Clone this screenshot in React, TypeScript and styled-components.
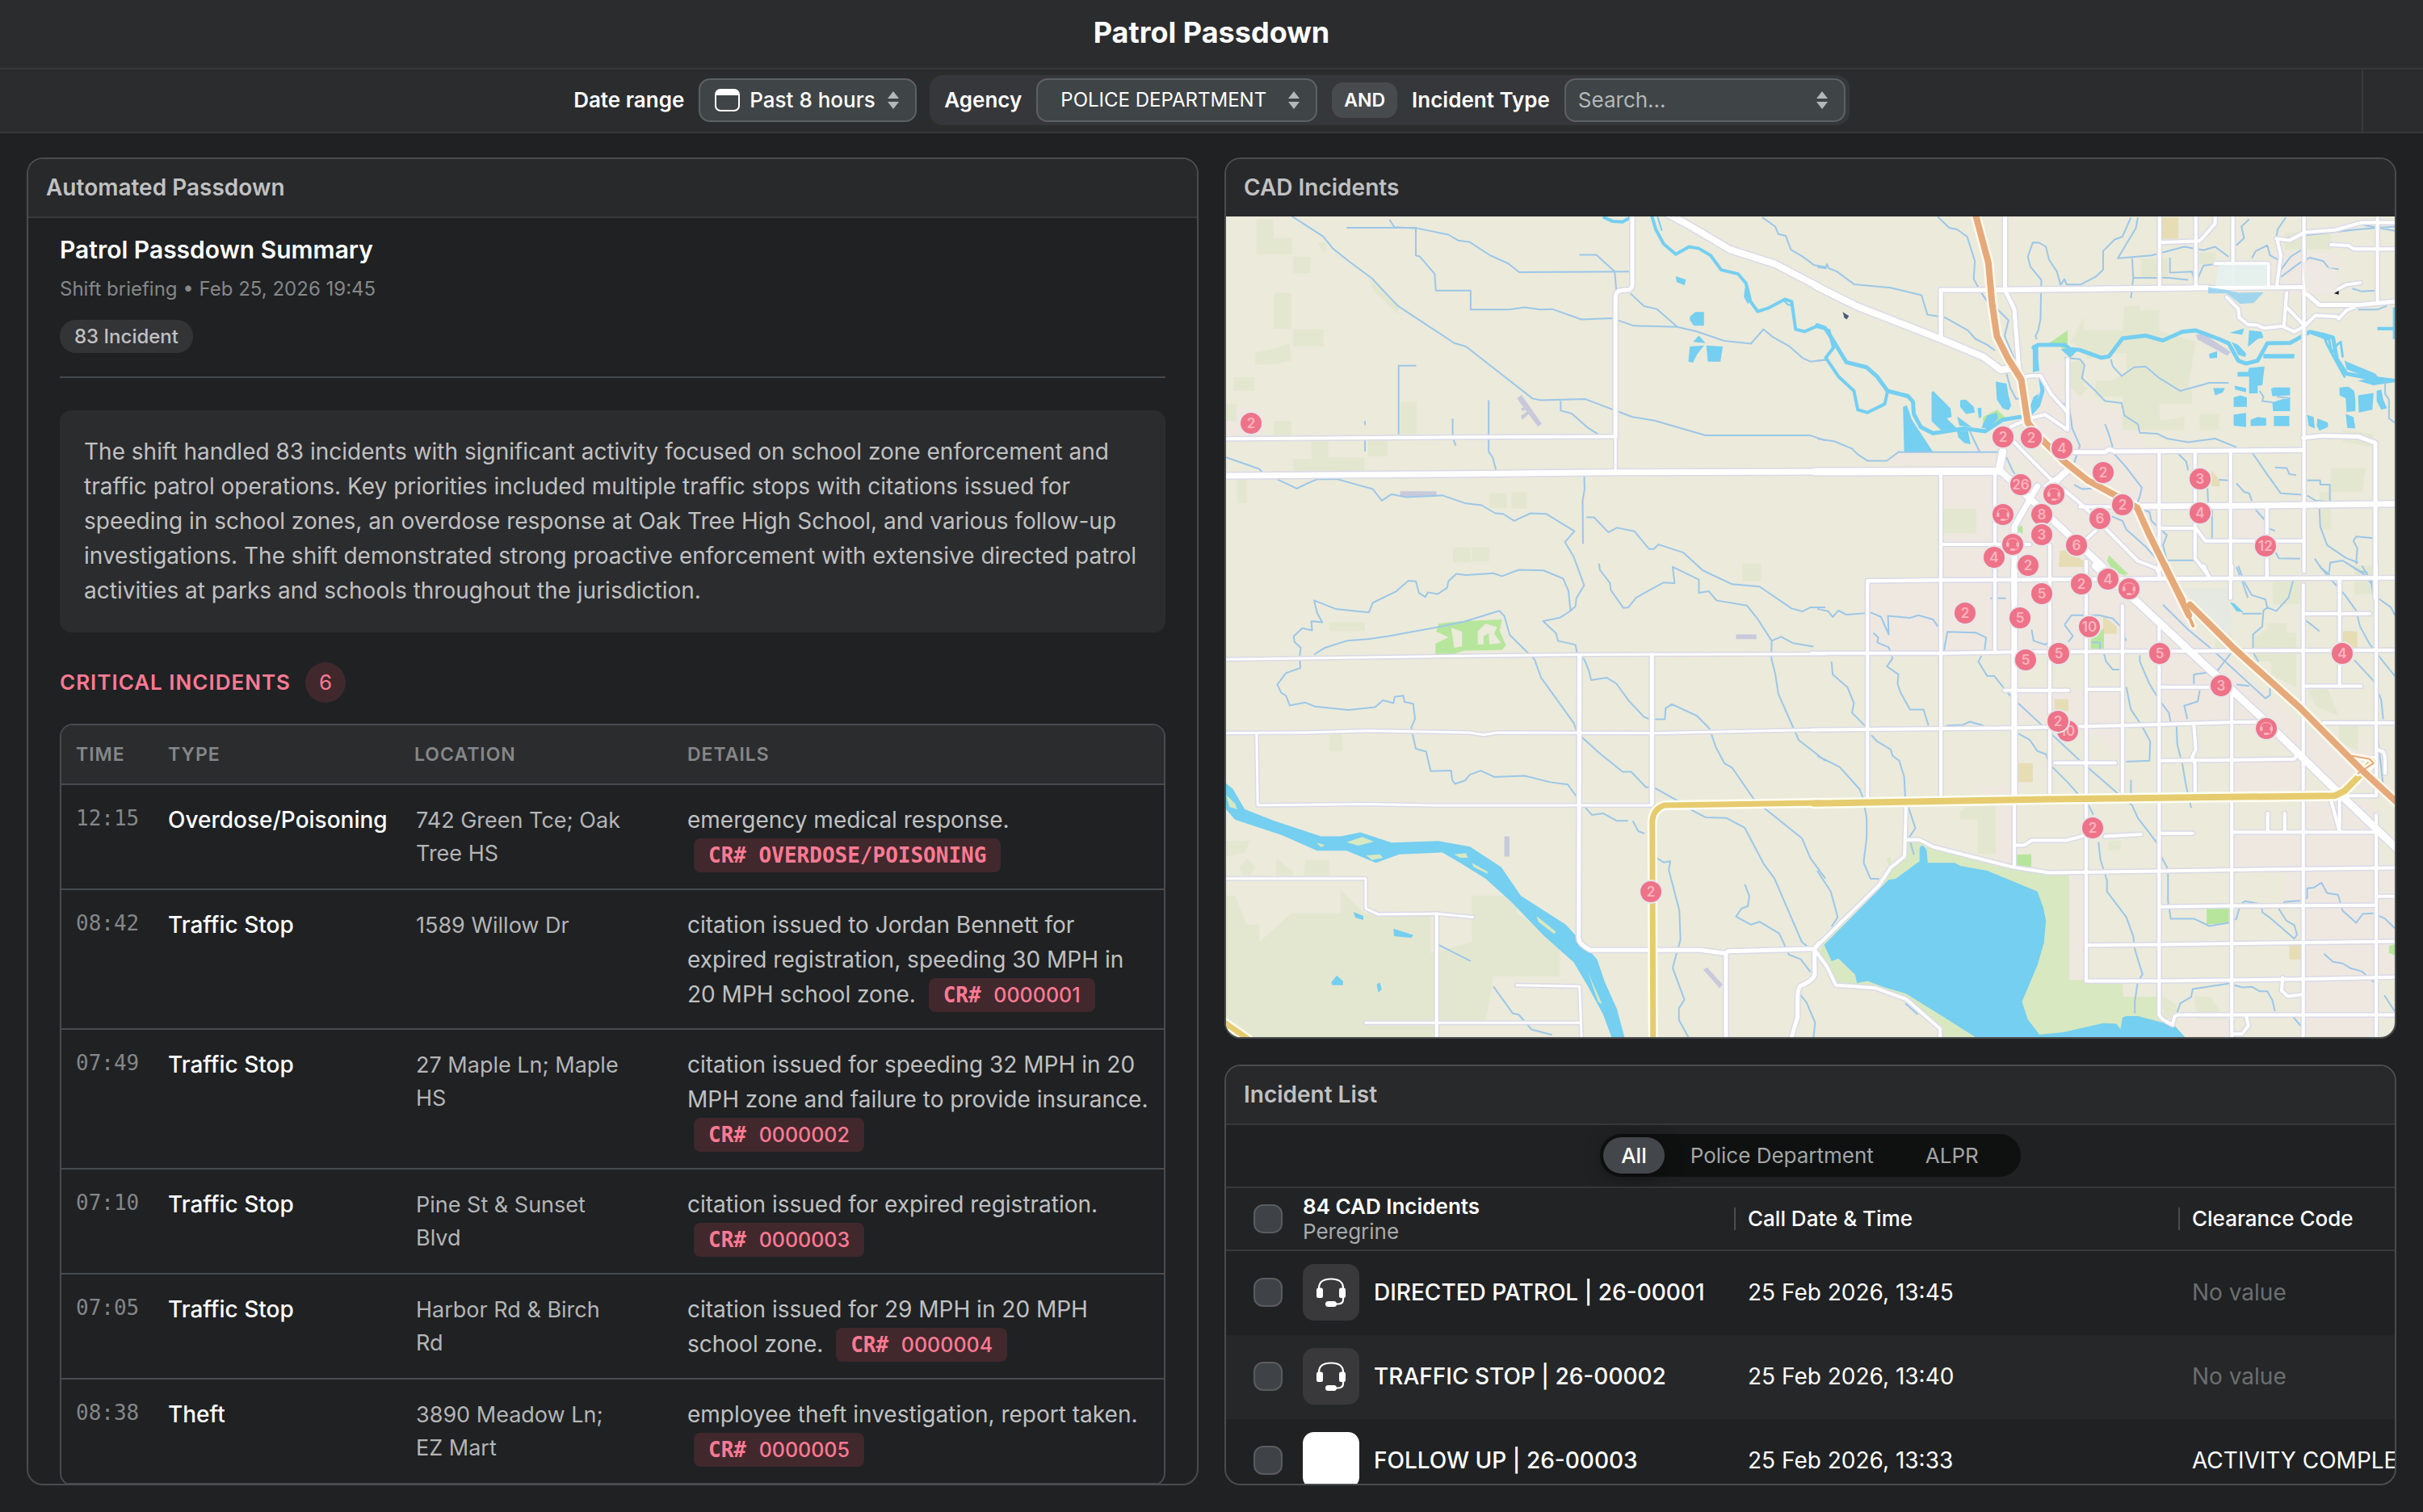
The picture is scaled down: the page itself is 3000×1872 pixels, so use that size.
import React, { useState } from "react";
import styled, { createGlobalStyle, css } from "styled-components";

const color = {
  page: "#1f2123",
  bar: "#2b2c2e",
  panelHead: "#28292b",
  line: "#37383a",
  edge: "#4a4c4e",
  tableLine: "#474c50",
  control: "#3f4446",
  controlEdge: "#5c6164",
  text: "#ffffff",
  soft: "#c0c1c2",
  muted: "#858788",
  dim: "#6c6e6f",
  pink: "#ff7a93",
  pinkBack: "#40282d",
};

const sans = `Inter, "Liberation Sans", sans-serif`;
const mono = `"DejaVu Sans Mono", "Liberation Mono", monospace`;

const GlobalStyle = createGlobalStyle`
  *, *::before, *::after { box-sizing: border-box; }
  body {
    margin: 0;
    background: ${color.page};
    color: ${color.text};
    font-family: ${sans};
    font-size: 28px;
  }
  button, input, select { font-family: inherit; color: inherit; margin: 0; }
  h1, h2, h3, p { margin: 0; }
`;

/* ---------- page frame ---------- */

const Page = styled.div`
  display: flex;
  flex-direction: column;
  height: 100vh;
  overflow: hidden;
`;

const TitleBar = styled.header`
  display: flex;
  align-items: center;
  justify-content: center;
  height: 86px;
  flex: none;
  padding-bottom: 4px;
  background: ${color.bar};
  border-bottom: 2px solid ${color.line};
`;

const PageTitle = styled.h1`
  font-size: 36px;
  line-height: 44px;
  font-weight: 700;
`;

const FilterBar = styled.div`
  display: flex;
  flex: none;
  height: 79px;
  background: ${color.bar};
  border-bottom: 2px solid ${color.line};

  &::before,
  &::after {
    content: "";
    width: 76px;
  }
  &::after {
    border-left: 2px solid ${color.line};
  }
`;

const Filters = styled.form`
  flex: 1;
  display: flex;
  align-items: center;
  justify-content: center;
  gap: 16px;
  padding-bottom: 2px;
`;

const FilterField = styled.div`
  display: flex;
  align-items: center;
  gap: 18px;
`;

const FilterGroup = styled.div`
  display: flex;
  align-items: center;
  gap: 18px;
  height: 62px;
  padding: 0 5px 0 18px;
  border-radius: 16px;
  background: #36373a;
`;

const FilterLabel = styled.label`
  font-size: 26px;
  line-height: 32px;
  font-weight: 600;
  white-space: nowrap;
`;

const ControlBox = styled.div<{ $width: number; $indent: number }>`
  display: flex;
  align-items: center;
  gap: 12px;
  width: ${(p) => p.$width}px;
  height: 54px;
  padding: 0 20px 0 ${(p) => p.$indent}px;
  border: 2px solid ${color.controlEdge};
  border-radius: 14px;
  background: ${color.control};
`;

const controlText = css`
  flex: 1;
  min-width: 0;
  height: 48px;
  padding: 0;
  border: 0;
  outline: 0;
  background: transparent;
`;

const PlainSelect = styled.select<{ $compact?: boolean }>`
  ${controlText}
  appearance: none;
  font-size: ${(p) => (p.$compact ? 24 : 26)}px;
  font-weight: ${(p) => (p.$compact ? 400 : 500)};
`;

const PlainInput = styled.input`
  ${controlText}
  font-size: 26px;
  &::placeholder {
    color: #b4b7b8;
    opacity: 1;
  }
`;

const Joiner = styled.span`
  padding: 0 15px;
  border-radius: 14px;
  background: #484b4e;
  font-size: 23px;
  line-height: 44px;
  font-weight: 600;
`;

const Board = styled.main`
  flex: 1;
  min-height: 0;
  display: grid;
  grid-template-columns: minmax(0, 1fr) minmax(0, 1fr);
  gap: 32px;
  padding: 30px 33px 33px;
`;

const Column = styled.div`
  display: grid;
  grid-template-rows: minmax(0, 1091fr) minmax(0, 521fr);
  gap: 32px;
  min-height: 0;
`;

const Panel = styled.section`
  display: flex;
  flex-direction: column;
  min-height: 0;
  overflow: hidden;
  border: 2px solid ${color.edge};
  border-radius: 20px;
`;

const PanelHead = styled.header<{ $lined?: boolean }>`
  flex: none;
  padding: 0 22px;
  background: ${color.panelHead};
  color: ${color.soft};
  border-bottom: ${(p) => (p.$lined ? `2px solid ${color.line}` : "0")};
`;

const PanelTitle = styled.h2`
  font-size: 28px;
  line-height: 71px;
  font-weight: 600;
`;

/* ---------- shift summary ---------- */

const Report = styled.div`
  padding: 19px 39px 0;
`;

const ReportHead = styled.div`
  display: flex;
  flex-direction: column;
  align-items: flex-start;
  padding-bottom: 29px;
  border-bottom: 2px solid #43484c;
`;

const ReportTitle = styled.h3`
  font-size: 30px;
  line-height: 40px;
  font-weight: 600;
`;

const ReportMeta = styled.p`
  margin-top: 13px;
  font-size: 24px;
  line-height: 32px;
  color: ${color.muted};
`;

const CountPill = styled.span`
  margin-top: 22px;
  padding: 0 18px;
  border-radius: 20px;
  background: #333436;
  color: ${color.soft};
  font-size: 24px;
  line-height: 41px;
  font-weight: 500;
`;

const Summary = styled.p`
  margin-top: 40px;
  padding: 30px;
  border-radius: 14px;
  background: #2b2c2e;
  color: ${color.soft};
  font-size: 28px;
  line-height: 43px;
`;

const SectionHead = styled.div`
  display: flex;
  align-items: center;
  gap: 18px;
  margin: 37px 0 26px;
  color: ${color.pink};
`;

const SectionTitle = styled.h3`
  font-size: 26px;
  line-height: 32px;
  font-weight: 600;
  letter-spacing: 1px;
`;

const CountBadge = styled.span`
  width: 50px;
  border-radius: 50%;
  background: ${color.pinkBack};
  font-size: 26px;
  line-height: 50px;
  text-align: center;
`;

const CriticalFrame = styled.div`
  overflow: hidden;
  border: 2px solid ${color.tableLine};
  border-radius: 16px;
`;

const CriticalTable = styled.table`
  width: 100%;
  table-layout: fixed;
  border-spacing: 0;

  th,
  td {
    border-bottom: 2px solid ${color.tableLine};
    text-align: left;
    vertical-align: top;
    white-space: pre-line;
  }
  th {
    padding: 0 18px;
    background: #2b2c2e;
    color: ${color.muted};
    font-size: 23px;
    line-height: 72px;
    font-weight: 600;
    letter-spacing: 1px;
  }
  td {
    padding: 22px 18px 20px;
  }
`;

const Col = styled.col<{ $width?: number }>`
  width: ${(p) => (p.$width ? `${p.$width}px` : "auto")};
`;

const TimeCell = styled.td`
  color: ${color.muted};
  font-family: ${mono};
  font-size: 26px;
  line-height: 38px;
`;

const TypeCell = styled.td`
  font-size: 28px;
  line-height: 43px;
  font-weight: 500;
`;

const PlaceCell = styled.td`
  color: #b4b5b6;
  font-size: 27px;
  line-height: 41px;
`;

const Place = styled.div`
  padding: 1px 0 0 2px;
`;

const DetailCell = styled.td`
  color: ${color.soft};
  font-size: 28px;
  line-height: 43px;
`;

const CaseTag = styled.span`
  margin-left: 8px;
  padding: 6px 18px;
  border-radius: 8px;
  background: ${color.pinkBack};
  color: ${color.pink};
  font-family: ${mono};
  font-size: 26px;
  line-height: 26px;
  font-weight: 700;
  white-space: nowrap;
`;

const CaseNumber = styled.span`
  font-family: ${sans};
  font-size: 25px;
  font-weight: 500;
`;

/* ---------- map ---------- */

const MapArea = styled.div`
  position: relative;
  flex: 1;
  min-height: 0;
  overflow: hidden;
  background: #ebeadb;
`;

const MapDrawing = styled.svg`
  display: block;
  width: 100%;
  height: 100%;
`;

const Pin = styled.button`
  position: absolute;
  display: grid;
  place-items: center;
  width: 30px;
  height: 30px;
  margin: -15px 0 0 -15px;
  padding: 0;
  border: 2px solid #e6e6ea;
  border-radius: 50%;
  background: #ee7388;
  color: #fab4bf;
  font-size: 17px;
  line-height: 20px;
  font-weight: 600;
`;

/* ---------- incident list ---------- */

const TabsRow = styled.div`
  display: flex;
  justify-content: center;
  flex: none;
  padding: 11px 0 12px;
  border-bottom: 2px solid ${color.line};
`;

const Tabs = styled.div`
  display: flex;
  padding: 4px 20px 4px 4px;
  border-radius: 27px;
  background: #0f1110;
`;

const Tab = styled.button<{ $active: boolean }>`
  height: 45px;
  padding: 0 ${(p) => (p.$active ? 22 : 32)}px;
  border: 0;
  border-radius: 23px;
  background: ${(p) => (p.$active ? "#43474b" : "transparent")};
  color: ${(p) => (p.$active ? color.text : "#a3a5a6")};
  font-size: 26px;
  font-weight: ${(p) => (p.$active ? 500 : 400)};
  box-shadow: ${(p) => (p.$active ? "0 4px 24px rgba(0, 0, 0, 0.4)" : "none")};
`;

const ListTable = styled.table`
  width: 100%;
  table-layout: fixed;
  border-spacing: 0;

  th,
  td {
    padding: 0;
    text-align: left;
    white-space: nowrap;
  }
  th {
    height: 78px;
    background: #222325;
    border-bottom: 2px solid ${color.line};
    font-size: 26px;
    line-height: 31px;
    font-weight: 500;
  }
  td {
    height: 104px;
    padding-bottom: 2px;
    font-size: 28px;
  }
  tbody tr:nth-child(even) {
    background: #262729;
  }
`;

const Check = styled.input`
  appearance: none;
  display: block;
  width: 36px;
  height: 36px;
  margin-left: 34px;
  border: 2px solid #585c5f;
  border-radius: 12px;
  background: #3f4347;
  &:checked {
    background: #7c8287;
  }
`;

const ListTotal = styled.div`
  font-weight: 600;
`;

const ListSource = styled.div`
  color: #a8aaab;
  font-weight: 400;
`;

const HeadText = styled.div`
  padding-left: 15px;
  border-left: 2px solid ${color.edge};
  line-height: 28px;
`;

const CellText = styled.div<{ $empty?: boolean }>`
  padding-left: 17px;
  color: ${(p) => (p.$empty ? color.dim : color.text)};
`;

const IncidentName = styled.div`
  display: flex;
  align-items: center;
  gap: 18px;
  font-weight: 500;
`;

const IconTile = styled.span<{ $blank?: boolean }>`
  display: grid;
  place-items: center;
  width: 70px;
  height: 70px;
  border-radius: 14px;
  background: ${(p) => (p.$blank ? "#ffffff" : "#39393b")};
`;

/* ---------- icons ---------- */

const CalendarIcon = () => (
  <svg width="31" height="28" viewBox="0 0 31 28" aria-hidden="true">
    <rect x="1" y="1" width="29" height="26" rx="6" fill="none" stroke="#fff" strokeWidth="2" />
    <path d="M1 8V7Q1 1 7 1H24Q30 1 30 7V8Z" fill="#fff" />
  </svg>
);

const SortIcon = () => (
  <svg width="14" height="22" viewBox="0 0 14 22" aria-hidden="true">
    <path d="M7 0L14 9H0Z M7 22L14 13H0Z" fill="#b4b7b8" />
  </svg>
);

const HeadsetIcon = ({ size = 36 }: { size?: number }) => (
  <svg width={size} height={size} viewBox="0 0 36 36" aria-hidden="true">
    <path
      d="M3 14V13Q3 1.500 18 1.500Q33 1.500 33 13V27Q33 32 27 32.500H23"
      fill="none"
      stroke="currentColor"
      strokeWidth="2.200"
    />
    <rect x="0" y="12.500" width="8" height="12.500" rx="2.500" fill="currentColor" />
    <rect x="28" y="12.500" width="8" height="12.500" rx="2.500" fill="currentColor" />
    <rect x="11" y="29" width="14" height="7" rx="3.500" fill="currentColor" />
  </svg>
);

/* ---------- map data ---------- */

type Line = [width: number, d: string];

interface Sheet {
  transform: string;
  urban: string;
  fields: string;
  school: string;
  meadow: string;
  park: string;
  airport: string;
  water: string;
  islands: string;
  rivers: Line[];
  streams: string;
  roads: Line[];
  yellow: Line[];
  highway: Line[];
}

const west: Sheet = {
  transform: "translate(-18 -87) scale(0.4847 0.7143)",
  urban: "M37 455H125V508H37Z",
  fields:
    "M115 128H158V160H205V188H115Z M208 192H252V221H208Z M160 255H204V317H160Z M208 318H286V348H208Z M112 358L160 352L200 342L204 372L166 378L112 380Z M56 401H110V425H56Z M37 447H64V477H37Z M160 477H204V504H160Z M482 444H524V500H482Z M255 512H298V540H392V565H208V543H255Z M400 511H450V538H400Z M66 578H90V620H66Z M710 602H754V628H710Z M766 600H806V629H766Z M617 696H662V720H710V696H665V722H617Z M1356 724H1404V755H1356Z M300 826H392V841H300Z M302 1020H334V1050H302Z M37 1205H98L85 1225L37 1232Z M72 1250L90 1235L112 1250L98 1264H76Z M165 1234L208 1258V1265H165Z M240 1238H300V1265H236Z M37 1300H60L90 1350H122V1380L205 1330H330V1290L390 1330H560V1400L665 1380V1300H780V1330L890 1380V1440H720L700 1520H580V1545H90L37 1518Z M272 168H290L295 182H282Z M400 230L480 275L476 292L420 255Z",
  school: "",
  meadow: "",
  park: "M572 882V863L606 852L574 842L580 828L640 824L742 821L736 840L752 866L742 874L645 875L618 881Z",
  airport:
    "M780 438L792 432L844 482L834 487Z M790 455L806 452L810 455L794 460Z M482 599H575V608H482Z M1340 847H1392V855H1340Z M748 1197H761V1232H748Z M1256 1428L1266 1424L1306 1454L1298 1460Z M790 468L812 458L815 462L794 475Z",
  water:
    "M37 1105L55 1115L85 1150L160 1170L280 1197H330L380 1190L460 1208L580 1205L660 1215L740 1250L790 1300L905 1350L985 1410L1005 1450L1035 1495L1055 1545H1022L1000 1505L960 1455L925 1415L850 1370L765 1310L700 1270L640 1245L590 1225L480 1228L420 1243L345 1222H270L180 1195L60 1168L37 1150Z M1222 296L1236 288H1258V312H1232L1222 302Z M1230 340L1245 329L1262 342Z M1222 348L1258 346L1240 362L1230 376L1218 374Z M1264 346L1306 348L1300 374H1268Z M1186 226L1212 232L1208 242L1188 236Z M362 1328L388 1335V1342L368 1338Z M465 1357L516 1368L510 1373L466 1370Z M306 1450L320 1438L336 1448V1455H308Z M422 1454L430 1450L435 1462L426 1468Z M1362 248L1370 240L1380 266L1370 274L1360 262Z",
  islands:
    "M345 1207L385 1198L415 1206L375 1213Z M395 1230L430 1228L438 1234L410 1238Z M37 1125L60 1140L66 1150L46 1146Z M620 1228L650 1226L655 1234H635Z M830 1335L880 1362L875 1366L835 1345Z M960 1430L998 1488L988 1484Z M665 1243L705 1258V1262L670 1250Z M268 1208L290 1212L280 1216Z",
  rivers: [
    [4, "M1125 122L1135 145L1155 170L1186 188L1220 175L1245 178L1275 190L1302 215L1345 222L1365 238L1375 268L1395 287L1420 282L1465 266L1482 270L1492 318L1515 322L1545 313L1568 317"],
    [4, "M1003 124L1025 131L1050 132L1068 125"],
    [2, "M1462 268Q1478 282 1484 272M1140 124L1150 146"],
  ],
  streams:
    "M205 122L285 157L310 178L345 197L410 230L475 277L580 324L620 342L650 348L820 438L842 441L955 439L1075 470L1130 476L1262 502H1530L1568 511 M345 142H522V190L532 192L570 222L573 251H662V284L760 284L800 280L840 284L870 283L945 301L1025 299L1078 312L1190 314L1240 322L1310 338L1378 343L1410 318L1435 332L1475 347L1510 368L1530 374L1568 371 M455 128L467 141L525 143L605 154L630 164L660 167L712 190L758 204L786 219L1070 218 M940 189H983L1030 218L1034 250 M1070 256L1105 278L1138 283L1190 314 M478 500V381H523 M616 473V505L624 520 M708 441V530L718 540L727 562 M392 477V484M392 509V530 M892 442V459L920 464L960 488L995 503 M1407 124L1440 140L1448 153L1467 156L1480 180L1510 192L1540 207L1568 210 M37 540L122 560L131 567 M168 578L218 594L245 585L270 578H322L412 595L435 615L460 604L498 609L590 606L650 620L690 623L725 637L745 638L773 650L815 637L855 638L927 668L903 687L925 712L952 762L932 784L930 798L917 806L912 772L898 750L848 736L785 735L742 746L720 741L650 744L625 742L605 755L602 766L578 777L553 774L546 782L530 775L522 755L503 754L470 773L412 792L402 809L318 803L262 788L270 810L283 826L255 824L257 840L232 836L210 850L212 860L228 870L225 885L227 905L190 914L168 934L178 948L190 953L200 970L240 965L265 972L350 978L418 973L438 961L465 966L468 955L490 953L493 964L515 967L520 993L510 1009L522 1045L548 1050L560 1084L612 1083L615 1099L622 1106L648 1100L660 1090L688 1083L722 1094L800 1092L865 1103L910 1107L942 1137L972 1160L1000 1157L1035 1170H1064 M917 806L890 818L847 824L880 845L885 858L930 865L935 884L952 890L963 908L970 926L1010 922L1034 932L1066 962L1105 990L1120 994L1158 994L1160 975L1176 968L1240 988L1272 1010L1288 1042L1310 1070L1330 1078L1388 1135L1508 1200L1530 1235L1568 1270 M262 882L290 870L345 858L400 855L450 850L580 834L645 825L735 806L748 815L762 848L825 890L842 922L925 1000L935 1018L990 1052L1050 1085H1072L1110 1112H1130L1195 1137 M952 570L953 595L948 615L949 690 M958 644H977L1014 670L1036 662L1080 668L1118 699H1130L1142 691L1205 705L1255 736L1330 760L1400 764L1482 802L1510 807L1530 800H1568 M990 724L992 735L1018 758L1020 770L1052 801L1065 800L1085 783L1155 757L1183 758L1178 730L1245 752V775L1270 772L1290 788L1368 797L1395 820L1431 858L1455 851L1485 862L1538 868 M1431 858L1430 888L1440 915L1448 950L1500 1030L1568 1066 M1225 1151L1262 1164L1315 1165L1362 1182L1410 1244L1438 1270L1508 1380L1530 1392 M1362 1280L1374 1300L1370 1318L1354 1322L1340 1336L1378 1350L1400 1345L1450 1365L1475 1402L1505 1410L1530 1432 M1138 1235L1155 1242L1172 1240L1168 1255L1195 1325L1198 1376L1178 1425L1208 1480L1194 1495V1515L1218 1545 M580 1385L662 1413 M720 1457L770 1504L785 1506L818 1532L870 1541 M1076 1170L1090 1188L1106 1192 M1500 1468L1520 1485L1542 1520L1538 1545",
  roads: [
    [4, "M37 508L640 505L1030 504"],
    [7, "M37 572L600 569L1030 566L1568 565"],
    [5, "M1075 122V242Q1073 250 1060 250L1044 251Q1032 253 1032 264V504"],
    [3, "M1032 508V560"],
    [8, "M1165 118L1215 136L1325 180L1440 205L1550 244"],
    [3, "M37 890L560 885L940 882L1568 881"],
    [5, "M940 884L938 1375Q940 1384 968 1394H1140L1250 1394L1312 1400L1320 1396L1540 1392L1552 1382"],
    [5, "M1125 882V1140"],
    [3, "M37 1018L240 1017L400 1014L660 1017L695 1021L730 1017L1130 1018L1568 1012"],
    [3, "M115 1018L118 1143L390 1141L560 1143H1125"],
    [3, "M37 1270H394V1322L425 1332L575 1331L667 1337"],
    [4, "M575 1331V1545"],
    [3, "M394 1520H942"],
    [3, "M780 1455L940 1457L945 1545"],
    [5, "M1314 1400V1545"],
    [5, "M1540 1392L1541 1435Q1540 1446 1505 1456Q1498 1460 1497 1475V1510L1482 1545"],
  ],
  yellow: [
    [7, "M1128 1547L1126 1170Q1130 1148 1158 1143L1555 1139"],
    [7, "M30 1518L95 1549"],
  ],
  highway: [],
};

const northEast: Sheet = {
  transform: "translate(732 -87) scale(0.4783 0.3571)",
  urban:
    "M1180 370H1350V515H1180Z M580 760L650 740L690 760V880L800 930L860 1060H640L560 1000L480 1000L380 1060H210L180 1100L470 1118V1568H130V1510H320V1130L560 1100L700 1060H885V1500L1000 1568H480Z M320 1130H640L885 1500V1568H320Z M1080 1255H1160V1370H1080Z M1265 370H1350V430H1265Z",
  fields:
    "M838 393H908V455H838Z M1210 300H1330V360H1210Z M795 555H835V570H885V640L980 680L960 840H880V720H760L700 740L680 700L655 680L690 595V640H790Z M655 750L690 745V830L700 840L680 870L650 830Z M720 815H760L800 790V715H910V780L970 840V895H885L890 985H790V870H720Z M325 1258H412V1345H325Z M860 960L950 940V985H860Z M990 930H1040V985H990Z M1330 1118H1420L1410 1200H1330Z M1300 1200H1330V1330H1300Z M980 370H1030V410H980Z M1360 985L1440 1000V1045L1360 1025Z M1180 1500H1250V1568H1180Z",
  school: "M892 248H935V322H892Z M628 1405L645 1400L690 1440V1458H625Z M1020 1125L1042 1160V1180H1020Z",
  meadow: "",
  park:
    "M600 685L648 640V700L665 730L640 715L628 690Z M428 970L430 940L465 915L490 945L470 955L440 980Z M500 1318H532V1345L515 1335Z M755 1420L806 1486L770 1482L750 1440Z",
  airport: "M980 655L1000 652L1070 715L1062 728L985 672Z",
  water:
    "M296 855L300 850L345 910L348 940L335 945L362 980L320 985L296 955Z M222 905L232 900L245 950L255 970L300 1062H225Z M370 882L385 880L405 905L408 925L385 930L370 905Z M462 818L490 825L495 865L502 900L495 917L480 910L465 880Z M362 938L400 975L368 970Z M362 988H390L397 1035L380 1030L365 1010Z M415 910L425 908V940L418 945Z M425 978L440 935L465 925L468 945L445 980Z M558 690H572V740L575 780L558 785Z M552 900L560 870L573 860L570 895L550 925Z M1088 784H1115L1118 770L1158 765L1152 830L1140 832V858H1118V800H1088Z M1078 872L1095 865L1112 872V905H1078Z M1175 842L1182 838H1224V865L1178 868Z M1178 890L1205 878H1224V920H1180Z M1078 932L1110 926V975L1078 970Z M1122 950L1140 940L1162 944V970L1122 972Z M1182 937H1222V972H1182Z M1352 838L1375 835L1390 850L1393 880V920L1370 923L1368 875L1352 865Z M1400 865L1440 857L1437 915L1402 925Z M1448 850L1460 845L1465 880L1475 910L1460 915L1448 885Z M1268 933L1285 940L1288 980L1272 970Z M1295 945L1322 960V975L1300 988L1293 970Z M1368 930L1388 940L1393 980L1372 978Z M1025 840L1055 840L1050 855L1030 865Z M1080 832L1110 840V855L1082 845Z M1068 648L1105 633L1100 655Z M1118 640L1150 645L1155 665L1140 670L1115 697Z M1155 722H1235V737H1155Z M1450 628H1495V640H1450Z M1014 722L1035 712V735L1016 737Z M1072 680L1090 690L1110 720L1108 732L1090 725Z M1365 745L1400 765L1445 790L1450 800L1495 808V820L1440 830L1400 815L1430 805L1370 775Z M630 705L668 702L672 712L655 735Z M1490 560H1500V670H1490Z",
  islands: "",
  rivers: [
    [5, "M0 622L20 632L38 668L75 750L128 768L155 800L182 850L235 868L248 888L250 930L268 975L300 997L380 980L435 990L480 950L548 935L572 900L583 850L578 800"],
    [4, "M30 640L42 700L22 735L55 800L95 850L105 915L130 925L175 895L182 850"],
    [5, "M560 700L572 690L640 690L655 705L680 708L735 735L755 730L790 668L850 658L895 675L945 645L980 640L1040 670L1065 685L1090 745L1110 755L1140 745L1165 685L1225 683L1275 645L1310 655L1335 665L1345 740L1370 790L1410 800L1450 810"],
    [3, "M1280 650L1325 672L1332 720L1345 690L1355 680L1360 730M1310 655L1320 690L1340 740L1365 800"],
  ],
  streams:
    "M0 420L22 425L25 410L30 425L50 435L95 480L190 492L270 518L285 585L330 595L390 640L410 670L440 690L460 710 M312 246L342 285L362 290L388 315L408 400L405 462L425 510L440 540 M545 385L558 335L575 336L592 350L600 395L620 435L630 482L640 462L645 480L680 482L720 455L740 430V365L770 325L790 315L812 248 M545 385L552 420L580 465L578 600L572 640L565 660L568 670 M830 248L825 285L778 390L865 380L950 350L1000 362L1030 350L1065 385 M815 390L818 458H910L960 465 M913 388V440L970 436L975 460 M818 458L812 528 M985 460L1000 415L1065 405 M1118 255L1098 280L1105 320L1085 345 M1213 248L1192 290L1188 320 M1125 390L1135 365L1165 345L1172 380L1200 400 M1195 455L1200 430L1225 385L1252 362 M1200 455L1250 405L1275 388L1310 400L1325 425L1350 428 M1190 325L1265 310L1400 290L1495 280 M1415 275L1495 295 M1385 495L1410 505L1445 502M1400 568L1450 568L1475 555 M465 565L495 605L485 660L520 770 M0 745L22 742M0 1015L45 1025L90 1050L105 1070L130 1092H180L210 1062H470 M395 990L420 1060 M490 790L500 840L515 878L525 875 M600 845L635 895H645 M650 880L660 980L680 1040L665 1100 M640 735L680 740L692 760L685 805L720 850L745 885L788 892L795 935L830 965L835 995L880 998L905 1015L960 1028L1030 1015L1085 1045 M760 740L765 765L788 798L820 768L850 765L885 805L940 850L1015 822L1065 822 M1145 850L1155 870L1152 885L1180 890M1190 870L1225 875 M1470 815V860L1480 880V945L1495 960 M745 965L755 1000L765 1045 M770 1070L800 1115L840 1185L835 1215L828 1240 M935 1068L955 1095L960 1125 M1010 1185L1012 1235 M1125 1062L1165 1140L1200 1205L1255 1210 M1185 1115L1215 1117L1222 1138L1240 1142M1268 1160H1302V1175H1327V1235L1290 1230L1268 1212 M1085 1170L1105 1200L1118 1205L1125 1232 M1300 1258L1302 1320L1320 1385L1370 1430L1400 1445M1440 1360L1395 1355L1388 1370L1398 1395L1395 1450 M1135 1262L1160 1300L1165 1325L1185 1335 M1288 1432L1305 1465L1325 1485L1330 1510M1325 1480L1328 1445L1360 1438L1405 1475L1425 1480M1360 1438L1380 1455L1420 1490L1435 1520L1440 1568 M1170 1370L1195 1430L1250 1432 M490 1080L505 1125L515 1145M665 1175L685 1190L712 1188 M745 1275L790 1300L800 1330L850 1390L880 1435 M830 1255L860 1270L865 1300L905 1350L895 1385L905 1437L975 1437 M1022 1262V1362 M1085 1460L1100 1510L1115 1568M1040 1158L1065 1160",
  roads: [
    [8, "M-6 484L100 555L320 670L430 732L475 777L515 770"],
    [5, "M320 665V500H440L1260 490"],
    [6, "M440 500L1010 492"],
    [5, "M486 246V500L510 565L522 770L528 800"],
    [4, "M886 246V490M886 335L990 330L1030 270V246M980 246V490M1076 246V490"],
    [4, "M1260 246V1475"],
    [5, "M1260 505L1300 552L1400 552L1495 540"],
    [4, "M1188 322L1222 328L1262 300L1340 292L1410 266H1495M1190 322L1200 380L1190 480"],
    [4, "M1330 343L1375 346L1390 358H1495M1450 246V545"],
    [4, "M1030 408H1168V490"],
    [4, "M1215 510L1208 625L1155 632L1140 622L1115 620L1092 595L1090 565L1060 525M1215 560L1262 625L1235 645L1208 628M1265 620L1290 588L1345 592L1350 600L1370 570L1390 560"],
    [4, "M1345 500L1368 482L1405 475"],
    [4, "M530 805L548 798L578 797L605 860L648 925V740"],
    [4, "M500 975L550 945L590 932L648 985V925"],
    [9, "M-5 1130L470 1128L480 1060"],
    [8, "M475 1128L560 1235L740 1460"],
    [7, "M570 1180L510 1320V1568"],
    [4, "M320 1135V1568M460 1140V1568"],
    [4, "M320 1382H510L550 1382M130 1568V1508L460 1505L885 1500L1495 1498"],
    [4, "M500 1015L600 1150L690 1250L830 1440L880 1465L888 1500M590 1180L620 1150"],
    [8, "M610 1172L645 1128"],
    [5, "M640 1062L745 1062L755 1052L770 1060L1255 1055M1258 1012L1310 1005L1400 1008L1445 1030V1568"],
    [4, "M680 1252H760L790 1250M885 1062V1490M978 1062V1430L1015 1495M1070 1055V1568"],
    [7, "M830 1250L1100 1248L1495 1241"],
    [4, "M888 1326H980L1005 1370H1255M1164 1255V1490"],
    [4, "M602 1385V1568M696 1440V1568M700 1360L720 1335"],
    [4, "M1352 1500V1568"],
  ],
  yellow: [],
  highway: [
    [8, "M410 240L443 405L452 540L465 660L495 740L528 810L545 960L575 1010L640 1095L700 1160L790 1225L828 1255L860 1350L912 1490L945 1575"],
  ],
};

const southEast: Sheet = {
  transform: "translate(732 433) scale(0.4783 0.3954)",
  urban:
    "M130 50H320V270H130Z M320 0H700V270H320Z M700 0H900L980 200L1440 700H1345L1200 540L1075 490H885V270H700Z M515 390H700V490H515Z M1075 610H1260V710H1075Z M1260 740H1440V830H1260Z M415 690H510V940H465V760H415Z M1080 840H1440V950H1300V1290H1260V1060H1210V950H1080Z M1260 950H1495V1290H1260Z M652 965H700V1297H652Z M1260 1290H1450V1475H1260Z M700 390H790V600L700 520Z M1260 520H1390L1450 600V700L1260 540Z M940 1410H1070V1475H960Z",
  fields:
    "M368 770L385 755L420 752H462V902H415V795H370Z M1165 180H1215V210H1240V380L1175 340V300H1130V225L1165 200Z M1350 495H1400V580L1350 550Z M1270 390L1320 380L1350 470L1290 440Z M975 1350H1018L1040 1390L1060 1420H985Z M888 1340L930 1375L935 1405L900 1420Z M1390 0H1440V90H1390Z M1180 45H1255V120H1180Z M1030 190H1070V260H1030Z M755 862H785V890H755Z",
  school:
    "M740 155L775 190V213H740Z M614 417H650V455H614Z M520 618H558V677H520Z M1360 205H1398V262H1360Z M1222 1185H1258V1233H1222Z M625 0H690V4H625Z",
  meadow:
    "M180 915H190V940L228 905V862H265L300 885L505 945L600 965H652V1297H790L792 1350H878V1410L925 1440L950 1475H320V1455L230 1358L150 1325L50 1315L0 1215L18 1180L160 1000L190 950Z",
  park:
    "M515 905L554 903V943L512 940Z M708 230L742 195V262H708Z M770 0L806 38L780 20Z M1008 1072H1066V1120L1008 1122Z M1480 1190L1495 1185V1220L1480 1212Z",
  airport: "",
  water:
    "M265 925V885Q270 865 283 890L286 930H355L372 940L440 955L570 1020L585 1070L592 1110L587 1180L570 1250L530 1365L545 1420L575 1468L640 1460L740 1432L775 1434L785 1452L790 1415L800 1410H830L925 1440L955 1480H415L330 1415L230 1340L170 1318L130 1300L103 1307L98 1280L55 1230L37 1238L18 1187L185 983L203 980Z M1068 114L1080 118L1104 146L1085 142Z",
  islands: "",
  rivers: [],
  streams:
    "M0 135L28 142L40 160L55 140L75 153L140 147L165 160L185 215L183 157L240 163L262 155L300 168L312 190 M145 210L158 225L155 240L185 255L195 290L180 315L210 340L208 370L215 395L240 450H275L288 500 M37 300L40 340L78 380L95 430L90 460L125 503 M335 500L378 498L395 488L430 500 M328 265L337 207L410 209L437 225L433 265 M425 282L417 300L440 345H458L500 408M520 430L600 520L680 610L780 715L815 750L830 790L878 865L888 905L908 950V1050L915 1105H975L1015 1128L1065 1118L1085 1105L1095 1060L1108 1050L1150 1060L1152 1085L1175 1105L1235 1168L1242 1155L1235 1125L1215 1112L1195 1075L1210 1052L1255 1048L1268 1040V1010L1285 1008L1305 992L1320 1025L1348 1030L1360 1080L1395 1118L1412 1090L1440 1088L1470 1105L1495 1135 M520 525L550 545L570 580L592 590L600 620L650 680L675 715 M140 530L155 550L190 575L195 595L212 610L225 660L228 730L240 770L254 822L238 850L250 905 M0 595L58 630L110 700L118 725L128 790V850L120 930L138 980H160 M0 955L35 1020L53 1100L37 1130 M700 745L715 780M728 865L733 920L750 985V1020L800 1100L818 1160L822 1200L842 1280L830 1300L822 1365V1402 M835 280V300L860 370L885 420L910 460L915 490 M930 500L932 560L945 620L955 690L968 758 M800 380L812 450L840 500L862 550L860 610L800 613 M812 670V740L795 742 M555 200L560 235L590 247L598 240 M640 185L658 155H730L765 165L785 190L800 235 M640 185L662 220L650 238 M710 240H732V262 M742 275L748 300L765 325H782 M895 122L960 200L1020 260L1160 415L1172 405V380 M1070 275L1035 330L975 340V370M990 390L985 425L950 438L958 480 M1085 372L1118 376 M1090 0L1105 50L1125 92L1160 105L1165 130L1155 140L1152 190L1128 215V270L1142 300M1165 130L1188 142L1220 100L1232 45 M1100 150H1150 M1300 0L1335 50L1365 90L1395 140L1405 190L1430 245L1465 300L1495 345M1410 0L1440 60L1450 100L1485 130L1495 155M1390 295L1440 360L1460 420L1465 480 M1265 172L1280 185L1300 205 M1312 1215L1335 1240L1360 1245L1380 1260L1410 1270L1442 1305 M1468 1345L1495 1395M1230 1410L1258 1450 M932 1398L940 1370L968 1350L972 1325L1065 1308L1100 1320L1125 1318L1145 1332H1165L1178 1360L1185 1395 M228 1370L260 1405M1448 505L1465 690M448 102H488",
  roads: [
    [4, "M130 735V48L320 44L885 42L1495 37"],
    [4, "M320 0V725M460 0V270M602 0V720M696 0V1300H885L1260 1294L1495 1288"],
    [7, "M510 0V730"],
    [4, "M510 740V940M790 125V720"],
    [4, "M-15 274L330 274L510 270L1075 266L1495 264"],
    [4, "M-15 514L510 508L790 500L1075 490L1160 488M1310 492H1495"],
    [4, "M485 390H650M700 387H790M888 380H1040M1262 377H1408"],
    [4, "M885 190V1405Q888 1420 920 1437L925 1410L935 1406H1495"],
    [4, "M1073 0V40M1073 400V1475M1258 60V700M1258 740V1475M1447 0V720M1447 780V1475"],
    [4, "M1352 45V375M1262 150H1430"],
    [9, "M720 0L830 115L960 262L1150 475L1340 700L1500 885"],
    [4, "M888 610L1075 608L1235 605L1242 590M975 500L980 575L970 600L978 620V710M615 617H772"],
    [4, "M230 750L226 910L190 945L160 1000L0 1190"],
    [4, "M-5 1205L25 1255L48 1313L150 1322L230 1357L318 1450V1475"],
    [4, "M230 858H265L300 880L505 943L600 961L880 956L1075 952L1495 946"],
    [4, "M515 875H535L555 860H645L690 845M745 847L838 841M888 838H972"],
    [4, "M1075 834H1445M1166 775V832M1210 775V832M1352 735V832L1330 735"],
    [4, "M888 1068L1075 1065L1445 1063M1450 1035H1495"],
    [4, "M700 1188L885 1186L1260 1180L1495 1176"],
    [4, "M1205 1290L1202 1330L1218 1348L1258 1342M1110 1408L1116 1440L1100 1466H1075"],
    [4, "M888 0L880 15M1000 0L1015 37M1164 0V35"],
    [4, "M1448 575L1465 582L1470 600V650M1360 720H1445"],
  ],
  yellow: [[8, "M-8 744L600 731L1340 720L1365 705L1410 650L1436 612"]],
  highway: [
    [8, "M900 0L940 100L962 155"],
    [4, "M955 140L973 188"],
    [8, "M965 122L1080 260L1250 445L1410 640L1500 740"],
    [2, "M1385 595L1430 605L1440 618L1400 650"],
  ],
};

const sheets: Sheet[] = [west, northEast, southEast];

type AreaKey = "urban" | "fields" | "meadow" | "school" | "park" | "airport" | "water" | "islands";

const areas: [AreaKey, string][] = [
  ["urban", "#eee8e1"],
  ["fields", "#e4e7d0"],
  ["meadow", "#d8e8c1"],
  ["school", "#e6ddb5"],
  ["park", "#b6e69c"],
  ["airport", "#c9c9dc"],
  ["water", "#74cff1"],
  ["islands", "#d8e8c1"],
];

type LineKey = "rivers" | "roads" | "yellow" | "highway";

const strokes: [LineKey, string, number][] = [
  ["rivers", "#74cff1", 0],
  ["roads", "#dadae8", 3],
  ["roads", "#ffffff", 0],
  ["yellow", "#fffef2", 5],
  ["yellow", "#e6cb6f", 0],
  ["highway", "#fff9ee", 5],
  ["highway", "#e6a97a", 0],
];

const Terrain = () => (
  <MapDrawing viewBox="0 0 1447 1017" preserveAspectRatio="xMidYMid slice" role="img" aria-label="Incident map">
    {areas.map(([key, fill]) => (
      <g key={key} fill={fill}>
        {sheets.map((sheet) => (
          <path key={sheet.transform} transform={sheet.transform} d={sheet[key]} />
        ))}
      </g>
    ))}
    <g fill="#ebeadb" transform={west.transform}>
      <path d="M612 835L640 842V868L620 870Z M680 864V842L700 828L730 834L722 846L740 862L710 864L708 845L695 850V864Z" />
    </g>
    <g transform={southEast.transform}>
      <path d="M940 70H1060L1075 190L1060 230L1000 140Z" fill="#e6e8e2" />
    </g>
    <g fill="none" stroke="#9cc7e8" strokeWidth="2" strokeLinejoin="round">
      {sheets.map((sheet) => (
        <path key={sheet.transform} transform={sheet.transform} d={sheet.streams} vectorEffect="non-scaling-stroke" />
      ))}
    </g>
    {strokes.map(([key, stroke, extra]) => (
      <g key={key + stroke} fill="none" stroke={stroke} strokeLinejoin="round" strokeLinecap="round">
        {sheets.map((sheet) =>
          sheet[key].map(([width, d]) => (
            <path
              key={d}
              transform={sheet.transform}
              d={d}
              strokeWidth={width + extra}
              vectorEffect="non-scaling-stroke"
            />
          ))
        )}
      </g>
    ))}
    <g transform={northEast.transform}>
      <path d="M1040 412H1164V486H1030Z" fill="#e6f2ef" opacity="0.9" />
      <path d="M1255 400L1345 430V512H1265Z" fill="#eeeae4" opacity="0.8" />
      <path d="M1012 490L1060 500L1090 510L1155 508L1130 545L1095 548L1060 512L1012 512Z" fill="#8fd0f2" opacity="0.8" />
      <path d="M1338 512L1350 502V516Z" fill="#1d1f22" />
      <path d="M66 576L82 590L76 602L70 596Z" fill="#4d5878" />
    </g>
  </MapDrawing>
);

type PinData = [x: number, y: number, count: string];

const pins: PinData[] = [
  [31, 256, "2"],
  [526, 837, "2"],
  [962, 273, "2"],
  [997, 274, "2"],
  [1035, 287, "4"],
  [1086, 317, "2"],
  [984, 332, "26"],
  [1025, 344, ""],
  [1110, 357, "2"],
  [1206, 325, "3"],
  [1206, 367, "4"],
  [962, 369, ""],
  [1010, 369, "8"],
  [1082, 374, "6"],
  [1010, 394, "3"],
  [974, 406, ""],
  [1053, 407, "6"],
  [1287, 408, "12"],
  [951, 422, "4"],
  [993, 432, "2"],
  [1059, 455, "2"],
  [1092, 449, "4"],
  [1118, 461, ""],
  [1010, 467, "5"],
  [983, 497, "5"],
  [915, 491, "2"],
  [1069, 508, "10"],
  [990, 550, "5"],
  [1031, 542, "5"],
  [1156, 542, "5"],
  [1382, 542, "4"],
  [1232, 582, "3"],
  [1288, 635, ""],
  [1042, 638, "10"],
  [1030, 626, "2"],
  [1073, 758, "2"],
];

/* ---------- table data ---------- */

interface Critical {
  time: string;
  type: string;
  place: string;
  detail: string;
  tag: React.ReactNode;
}

const caseNo = (n: string) => (
  <>
    CR# <CaseNumber>{n}</CaseNumber>
  </>
);

const criticals: Critical[] = [
  {
    time: "12:15",
    type: "Overdose/Poisoning",
    place: "742 Green Tce; Oak\nTree HS",
    detail: "emergency medical response.\n",
    tag: "CR# OVERDOSE/POISONING",
  },
  {
    time: "08:42",
    type: "Traffic Stop",
    place: "1589 Willow Dr",
    detail: "citation issued to Jordan Bennett for\nexpired registration, speeding 30 MPH in\n20 MPH school zone. ",
    tag: caseNo("0000001"),
  },
  {
    time: "07:49",
    type: "Traffic Stop",
    place: "27 Maple Ln; Maple\nHS",
    detail: "citation issued for speeding 32 MPH in 20\nMPH zone and failure to provide insurance.\n",
    tag: caseNo("0000002"),
  },
  {
    time: "07:10",
    type: "Traffic Stop",
    place: "Pine St & Sunset\nBlvd",
    detail: "citation issued for expired registration.\n",
    tag: caseNo("0000003"),
  },
  {
    time: "07:05",
    type: "Traffic Stop",
    place: "Harbor Rd & Birch\nRd",
    detail: "citation issued for 29 MPH in 20 MPH\nschool zone. ",
    tag: caseNo("0000004"),
  },
  {
    time: "08:38",
    type: "Theft",
    place: "3890 Meadow Ln;\nEZ Mart",
    detail: "employee theft investigation, report taken.\n",
    tag: caseNo("0000005"),
  },
];

interface Incident {
  name: string;
  called: string;
  clearance?: string;
  blank?: boolean;
}

const incidents: Incident[] = [
  { name: "DIRECTED PATROL | 26-00001", called: "25 Feb 2026, 13:45" },
  { name: "TRAFFIC STOP | 26-00002", called: "25 Feb 2026, 13:40" },
  { name: "FOLLOW UP | 26-00003", called: "25 Feb 2026, 13:33", clearance: "ACTIVITY COMPLETED", blank: true },
];

const tabs = ["All", "Police Department", "ALPR"];

export default function App() {
  const [tab, setTab] = useState("All");

  return (
    <Page>
      <GlobalStyle />
      <TitleBar>
        <PageTitle>Patrol Passdown</PageTitle>
      </TitleBar>

      <FilterBar>
        <Filters>
          <FilterField>
            <FilterLabel htmlFor="range">Date range</FilterLabel>
            <ControlBox $width={270} $indent={18}>
              <CalendarIcon />
              <PlainSelect id="range">
                <option>Past 8 hours</option>
              </PlainSelect>
              <SortIcon />
            </ControlBox>
          </FilterField>
          <FilterGroup>
            <FilterLabel htmlFor="agency">Agency</FilterLabel>
            <ControlBox $width={348} $indent={28}>
              <PlainSelect id="agency" $compact>
                <option>POLICE DEPARTMENT</option>
              </PlainSelect>
              <SortIcon />
            </ControlBox>
            <Joiner>AND</Joiner>
            <FilterLabel htmlFor="kind">Incident Type</FilterLabel>
            <ControlBox $width={348} $indent={15}>
              <PlainInput id="kind" placeholder="Search..." />
              <SortIcon />
            </ControlBox>
          </FilterGroup>
        </Filters>
      </FilterBar>

      <Board>
        <Panel>
          <PanelHead $lined>
            <PanelTitle>Automated Passdown</PanelTitle>
          </PanelHead>
          <Report>
            <ReportHead>
              <ReportTitle>Patrol Passdown Summary</ReportTitle>
              <ReportMeta>Shift briefing • Feb 25, 2026 19:45</ReportMeta>
              <CountPill>83 Incident</CountPill>
            </ReportHead>
            <Summary>
              The shift handled 83 incidents with significant activity focused on school zone enforcement and traffic
              patrol operations. Key priorities included multiple traffic stops with citations issued for speeding in
              school zones, an overdose response at Oak Tree High School, and various follow-up investigations. The
              shift demonstrated strong proactive enforcement with extensive directed patrol activities at parks and
              schools throughout the jurisdiction.
            </Summary>
            <SectionHead>
              <SectionTitle>CRITICAL INCIDENTS</SectionTitle>
              <CountBadge>6</CountBadge>
            </SectionHead>
            <CriticalFrame>
              <CriticalTable>
                <colgroup>
                  <Col $width={114} />
                  <Col $width={305} />
                  <Col $width={338} />
                  <Col />
                </colgroup>
                <thead>
                  <tr>
                    <th scope="col">TIME</th>
                    <th scope="col">TYPE</th>
                    <th scope="col">LOCATION</th>
                    <th scope="col">DETAILS</th>
                  </tr>
                </thead>
                <tbody>
                  {criticals.map((row) => (
                    <tr key={row.time}>
                      <TimeCell>{row.time}</TimeCell>
                      <TypeCell>{row.type}</TypeCell>
                      <PlaceCell>
                        <Place>{row.place}</Place>
                      </PlaceCell>
                      <DetailCell>
                        {row.detail}
                        <CaseTag>{row.tag}</CaseTag>
                      </DetailCell>
                    </tr>
                  ))}
                </tbody>
              </CriticalTable>
            </CriticalFrame>
          </Report>
        </Panel>

        <Column>
          <Panel>
            <PanelHead>
              <PanelTitle>CAD Incidents</PanelTitle>
            </PanelHead>
            <MapArea>
              <Terrain />
              {pins.map(([x, y, count]) => (
                <Pin
                  key={`${x}-${y}`}
                  type="button"
                  aria-label={count ? `${count} incidents` : "Incident"}
                  style={{ left: `${(x / 1447) * 100}%`, top: `${(y / 1017) * 100}%` }}
                >
                  {count || <HeadsetIcon size={16} />}
                </Pin>
              ))}
            </MapArea>
          </Panel>

          <Panel>
            <PanelHead $lined>
              <PanelTitle>Incident List</PanelTitle>
            </PanelHead>
            <TabsRow>
              <Tabs>
                {tabs.map((name) => (
                  <Tab key={name} type="button" $active={name === tab} onClick={() => setTab(name)}>
                    {name}
                  </Tab>
                ))}
              </Tabs>
            </TabsRow>
            <ListTable>
              <colgroup>
                <Col $width={95} />
                <Col $width={534} />
                <Col $width={550} />
                <Col />
              </colgroup>
              <thead>
                <tr>
                  <th scope="col">
                    <Check type="checkbox" aria-label="Select all incidents" />
                  </th>
                  <th scope="col">
                    <ListTotal>84 CAD Incidents</ListTotal>
                    <ListSource>Peregrine</ListSource>
                  </th>
                  <th scope="col">
                    <HeadText>Call Date &amp; Time</HeadText>
                  </th>
                  <th scope="col">
                    <HeadText>Clearance Code</HeadText>
                  </th>
                </tr>
              </thead>
              <tbody>
                {incidents.map((row) => (
                  <tr key={row.name}>
                    <td>
                      <Check type="checkbox" aria-label={`Select ${row.name}`} />
                    </td>
                    <td>
                      <IncidentName>
                        <IconTile $blank={row.blank}>{!row.blank && <HeadsetIcon />}</IconTile>
                        {row.name}
                      </IncidentName>
                    </td>
                    <td>
                      <CellText>{row.called}</CellText>
                    </td>
                    <td>
                      <CellText $empty={!row.clearance}>{row.clearance ?? "No value"}</CellText>
                    </td>
                  </tr>
                ))}
              </tbody>
            </ListTable>
          </Panel>
        </Column>
      </Board>
    </Page>
  );
}
